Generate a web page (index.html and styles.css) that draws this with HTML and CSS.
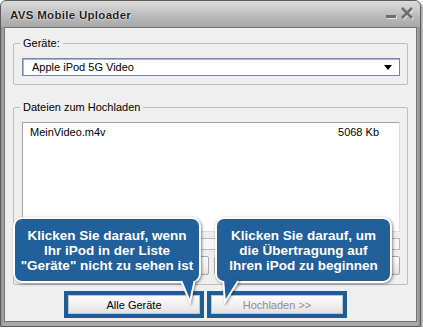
FILE: index.html
```html
<!DOCTYPE html>
<html lang="de">
   <head>
      <meta charset="UTF-8">
      <title>AVS Mobile Uploader</title>
      <link rel="stylesheet" href="styles.css">
   </head>
   <body>
      <div class="window">
         <div class="titlebar">
            <span class="title">AVS Mobile Uploader</span>
            <svg class="controls" width="30" height="14" viewBox="0 0 30 14">
               <!-- minimize -->
               <rect x="1" y="9" width="10" height="3" fill="#fff" opacity="0.6"/>
               <rect x="0" y="8" width="10" height="3" fill="#6d6d6d"/>
               <!-- close -->
               <path d="M16 1 L26 11 M26 1 L16 11" stroke="#fff" stroke-width="2.6" opacity="0.6" transform="translate(1 1)"/>
               <path d="M16 1 L26 11 M26 1 L16 11" stroke="#6d6d6d" stroke-width="2.6"/>
            </svg>
         </div>
         <div class="frame">
            <div class="content">
               <fieldset class="group devices">
                  <legend>Geräte:</legend>
                  <div class="select">
                     <span>Apple iPod 5G Video</span>
                     <svg width="8" height="5" viewBox="0 0 8 5"><path d="M0 0 H8 L4 5 Z" fill="#000"/></svg>
                  </div>
               </fieldset>
               <fieldset class="group files">
                  <legend>Dateien zum Hochladen</legend>
                  <div class="listbox">
                     <div class="file-row">
                        <span>MeinVideo.m4v</span>
                        <span>5068 Kb</span>
                     </div>
                  </div>
                  <div class="progress"></div>
                  <div class="list-buttons">
                     <button class="btn"></button>
                     <button class="btn"></button>
                  </div>
               </fieldset>
               <div class="actions">
                  <button class="btn marked">Alle Geräte</button>
                  <button class="btn marked" disabled>Hochladen &gt;&gt;</button>
               </div>
            </div>
         </div>

         <!-- hint callouts over the dialog -->
         <div class="callout callout-left">Klicken Sie darauf, wenn<br>Ihr iPod in der Liste<br>"Geräte" nicht zu sehen ist</div>
         <svg class="tail tail-left" width="24" height="26" viewBox="0 0 24 26">
            <path d="M4 0 L14 24 L19 0 Z" fill="#22609b"/>
            <path d="M5.2 3 L14 24 L18.6 3" fill="none" stroke="#fff" stroke-width="2"/>
         </svg>
         <div class="callout callout-right">Klicken Sie darauf, um<br>die Übertragung auf<br>Ihren iPod zu beginnen</div>
         <svg class="tail tail-right" width="26" height="26" viewBox="0 0 26 26">
            <path d="M5 0 L7 24 L22 0 Z" fill="#22609b"/>
            <path d="M5.2 3 L7 24 L20.2 3" fill="none" stroke="#fff" stroke-width="2"/>
         </svg>
      </div>
   </body>
</html>
```

FILE: styles.css
```css
* {
margin: 0;
padding: 0;
box-sizing: border-box;
}
body {
background: #fff;
font-family: "Liberation Sans", Arial, sans-serif;
font-size: 11px;
color: #000;
}
.window {
position: relative;
width: 421px;
height: 327px;
border: 1px solid #5c5c5c;
border-radius: 6px 6px 0 0;
background: linear-gradient(to right, #8e8e8e, #a9a9a9 3px, #a9a9a9 calc(100% - 3px), #8e8e8e);
box-shadow: 2px 2px 2px rgba(0, 0, 0, 0.35);
display: flex;
flex-direction: column;
}
.titlebar {
height: 26px;
display: flex;
align-items: center;
justify-content: space-between;
padding: 2px 4px 0 9px;
background: linear-gradient(to bottom, #dcdcdc, #b9b9b9 60%, #a7a7a7);
border-radius: 5px 5px 0 0;
}
.title {
font-weight: bold;
font-size: 11.5px;
letter-spacing: 0.3px;
color: #1c1c1c;
text-shadow: 0 0 2px #fff, 0 0 1px #fff;
}
.controls {
margin-top: -2px;
}
.frame {
flex: 1;
display: flex;
padding: 0 3px 4px;
}
.content {
flex: 1;
background: #efefef;
border: 1px solid #727272;
padding: 0 8px;
}
.group {
border: 1px solid #bdbdbd;
border-radius: 2px;
padding: 8px 7px 8px 8px;
}
.group legend {
margin-left: -2px;
padding: 0 3px;
line-height: 13px;
color: #000;
}
.devices {
margin-top: 9px;
}
.files {
margin-top: 16px;
padding-bottom: 9px;
}
.select {
height: 18px;
display: flex;
align-items: center;
justify-content: space-between;
padding: 0 7px 0 9px;
background: #fff;
border: 1px solid #7486b0;
box-shadow: inset 1px 1px 0 #a9b7d3;
}
.listbox {
height: 110px;
background: #fff;
border: 1px solid #a3a3a3;
border-right-color: #dedede;
border-bottom-color: #dedede;
padding: 3px 20px 0 7px;
}
.file-row {
display: flex;
justify-content: space-between;
line-height: 13px;
}
.progress {
height: 12px;
margin-top: 6px;
background: #f7f7f7;
border: 1px solid #b8b8b8;
}
.list-buttons {
display: flex;
gap: 5px;
margin-top: 6px;
}
.list-buttons .btn {
flex: 1;
}
.btn {
height: 19px;
font-family: inherit;
font-size: 11px;
color: #000;
background: linear-gradient(to bottom, #fdfdfd, #ececec 70%, #e1e1e1);
border: 1px solid #a9a9a9;
border-radius: 2px;
}
.btn:disabled {
color: #8d8d8d;
}
.actions {
display: flex;
gap: 11px;
margin-top: 10px;
padding-left: 55px;
}
.actions .btn {
width: 132px;
}
.marked {
border-radius: 0;
border-color: #c4c4c4;
outline: 4px solid #1f5c97;
}
.callout {
position: absolute;
top: 216px;
height: 66px;
display: flex;
align-items: center;
justify-content: center;
text-align: center;
font-size: 13.5px;
font-weight: bold;
line-height: 15px;
color: #fff;
background: #22609b;
border: 2px solid #fff;
border-radius: 9px;
box-shadow: 1px 1px 3px rgba(0, 0, 0, 0.45);
}
.callout-left {
left: 12px;
width: 188px;
}
.callout-right {
left: 214px;
width: 177px;
}
.tail {
position: absolute;
top: 277px;
filter: drop-shadow(1px 1px 1px rgba(0, 0, 0, 0.4));
}
.tail-left {
left: 175px;
}
.tail-right {
left: 217px;
}
```
